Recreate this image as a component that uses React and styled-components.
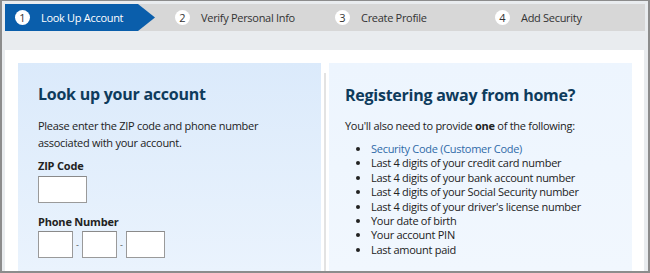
import React from "react";
import styled, { createGlobalStyle } from "styled-components";

const Global = createGlobalStyle`
  html, body { margin: 0; padding: 0; background: #fff; }
  body { font-family: "Open Sans", "Liberation Sans", sans-serif; }
  * { box-sizing: border-box; }
`;

const Frame = styled.div`
  width: 650px;
  height: 273px;
  overflow: hidden;
  border-style: solid;
  border-color: #8c8c8c;
  border-width: 1px 2px 2px 2px;
  background: #e9ecef;
  padding: 3px 3px 0 3px;
  display: flex;
  flex-direction: column;
`;

const StepBar = styled.div`
  display: grid;
  grid-template-columns: repeat(4, 160px);
  height: 27px;
  background: #d7d7d7;
  flex: none;
`;

const Step = styled.div`
  display: flex;
  align-items: center;
  gap: 11px;
  padding-left: 10px;
  height: 27px;
  width: ${(p) => (p.$active ? "150px" : "160px")};
  background: ${(p) => (p.$active ? "#0a5eab" : "transparent")};
  clip-path: ${(p) =>
    p.$active
      ? "polygon(0 0, 133px 0, 150px 50%, 133px 100%, 0 100%)"
      : "none"};
  color: ${(p) => (p.$active ? "#fff" : "#333")};
  font-size: 11px;
  letter-spacing: -0.3px;
`;

const StepNum = styled.span`
  width: 15px;
  height: 15px;
  border-radius: 50%;
  background: #fff;
  color: #333;
  font-size: 11px;
  letter-spacing: 0;
  display: flex;
  align-items: center;
  justify-content: center;
  flex: none;
`;

const Spacer = styled.div`
  height: 19px;
  flex: none;
`;

const Panel = styled.div`
  flex: 1;
  background: #fff;
  padding: 13px 12px 0 13px;
  display: flex;
  align-items: stretch;
  margin-right: 1px;
`;

const Card = styled.section`
  width: 303px;
  padding: ${(p) => (p.$right ? "21px 0 0 16px" : "20px 0 0 20px")};
  background: ${(p) =>
    p.$right
      ? "linear-gradient(180deg, #edf5fe 0%, #f1f7fe 100%)"
      : "linear-gradient(180deg, #dbeafb 0%, #eaf3fd 100%)"};
  color: #222;
`;

const Divider = styled.div`
  width: 2px;
  margin: 10px 3px 0 3px;
  background: #e3e3e3;
`;

const Heading = styled.h2`
  margin: 0;
  font-size: 16px;
  line-height: 22px;
  font-weight: 700;
  letter-spacing: -0.25px;
  color: #0e3b5c;
`;

const Para = styled.p`
  margin: ${(p) => (p.$right ? "11px 0 0 0" : "12px 0 0 0")};
  font-size: 11px;
  line-height: 17px;
  letter-spacing: -0.28px;
`;

const Label = styled.div`
  margin-top: ${(p) => p.$mt}px;
  font-size: 11px;
  line-height: 17px;
  font-weight: 700;
  letter-spacing: -0.2px;
`;

const InputRow = styled.div`
  display: flex;
  align-items: center;
  margin-top: ${(p) => p.$mt}px;
`;

const Box = styled.input`
  width: ${(p) => p.$w}px;
  height: 27px;
  border: 1px solid #9a9a9a;
  border-top-color: #8a8a8a;
  background: #fff;
  padding: 0;
  margin: 0;
  font: inherit;
`;

const Dash = styled.span`
  width: 9px;
  text-align: center;
  font-size: 9px;
  color: #555;
`;

const List = styled.ul`
  margin: 8px 0 0 0;
  padding: 0 0 0 26px;
  font-size: 11px;
  line-height: 14.4px;
  letter-spacing: -0.28px;
`;

const Link = styled.a`
  color: #2f6aa8;
  text-decoration: none;
`;

const steps = ["Look Up Account", "Verify Personal Info", "Create Profile", "Add Security"];
const items = [
  "Last 4 digits of your credit card number",
  "Last 4 digits of your bank account number",
  "Last 4 digits of your Social Security number",
  "Last 4 digits of your driver's license number",
  "Your date of birth",
  "Your account PIN",
  "Last amount paid",
];

export default function App() {
  return (
    <>
      <Global />
      <Frame>
        <StepBar>
          {steps.map((s, i) => (
            <Step key={s} $active={i === 0}>
              <StepNum>{i + 1}</StepNum>
              {s}
            </Step>
          ))}
        </StepBar>
        <Spacer />
        <Panel>
          <Card>
            <Heading>Look up your account</Heading>
            <Para>
              Please enter the ZIP code and phone number
              <br />
              associated with your account.
            </Para>
            <Label $mt={6}>ZIP Code</Label>
            <InputRow $mt={2}>
              <Box $w={49} aria-label="ZIP Code" />
            </InputRow>
            <Label $mt={10}>Phone Number</Label>
            <InputRow $mt={1}>
              <Box $w={35} aria-label="Area code" />
              <Dash>-</Dash>
              <Box $w={35} aria-label="Prefix" />
              <Dash>-</Dash>
              <Box $w={39} aria-label="Line number" />
            </InputRow>
          </Card>
          <Divider />
          <Card $right>
            <Heading>Registering away from home?</Heading>
            <Para $right>
              You'll also need to provide <b>one</b> of the following:
            </Para>
            <List>
              <li>
                <Link href="#">Security Code (Customer Code)</Link>
              </li>
              {items.map((t) => (
                <li key={t}>{t}</li>
              ))}
            </List>
          </Card>
        </Panel>
      </Frame>
    </>
  );
}
